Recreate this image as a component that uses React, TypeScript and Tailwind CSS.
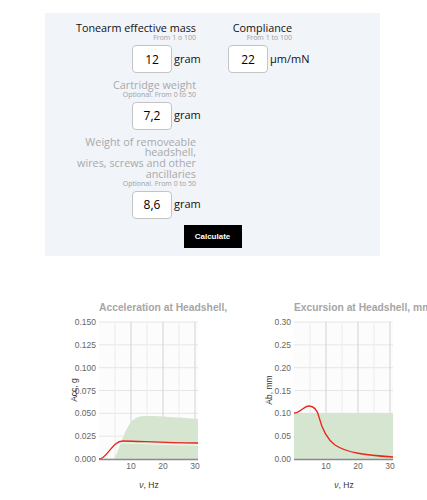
import React from 'react';

const sans = { fontFamily: '"Open Sans", sans-serif' };

type FieldProps = {
  label: React.ReactNode;
  hint: string;
  value: string;
  unit: string;
  muted?: boolean;
  className?: string;
};

const Field: React.FC<FieldProps> = ({ label, hint, value, unit, muted, className }) => (
  <div className={`flex flex-col items-end ${className ?? ''}`}>
    <p
      className={`max-w-[130px] text-right text-[10.8px] ${
        muted ? 'leading-[10.7px] text-[#a9a9a9]' : 'leading-[12px] text-[#111]'
      }`}
    >
      {label}
    </p>
    <p className="text-right text-[7px] leading-[7px] text-[#a0a0a0]">{hint}</p>
    <div className="mt-[4px] flex w-16 items-center">
      <input
        type="text"
        defaultValue={value}
        className="h-7 w-10 shrink-0 rounded-[4px] border border-[#c4c4c4] bg-white text-center text-[12px] text-black outline-none"
      />
      <span className="ml-[2px] whitespace-nowrap text-[11px] text-[#111]">{unit}</span>
    </div>
  </div>
);

type ChartProps = {
  title: string;
  yLabel: string;
  ticks: string[];
  fill: string;
  line: string;
  shadow?: boolean;
};

// plot area: x 39..138, y 33..170
const Chart: React.FC<ChartProps> = ({ title, yLabel, ticks, fill, line, shadow }) => {
  const top = 33;
  const bottom = 170;
  const step = (bottom - top) / 6;
  const vx = (v: number) => 39 + v * 3.2;
  return (
    <svg width="195" height="210" viewBox="0 0 195 210" className="shrink-0" style={{ fontFamily: '"Liberation Sans", Arial, sans-serif' }}>
      <text x="39" y="22" fontSize="10.3" fontWeight="bold" fill="#a6a6a6">
        {title}
      </text>
      <rect x="39" y={top} width="99" height={bottom - top} fill="#fcfcfc" />
      {ticks.map((t, i) => {
        const y = bottom - i * step;
        return (
          <g key={t}>
            <line x1="39" x2="138" y1={y} y2={y} stroke="#e6e6e6" strokeWidth="1" />
            <text x="36" y={y + 3} fontSize="8.5" fill="#666" textAnchor="end">
              {t}
            </text>
          </g>
        );
      })}
      {[5, 10, 15, 20, 25, 30].map((v) => (
        <line
          key={v}
          x1={vx(v)}
          x2={vx(v)}
          y1={top}
          y2={bottom}
          stroke={v % 10 === 0 ? '#d2d2d2' : '#ececec'}
          strokeWidth="1"
        />
      ))}
      <path d={fill} fill="#d5e5cf" />
      {shadow && <path d={line} transform="translate(0,2)" fill="none" stroke="#f4fbf6" strokeWidth="1" />}
      <path d={line} fill="none" stroke="#e8261c" strokeWidth="1.3" />
      <line x1="39" x2="138" y1={bottom + 0.5} y2={bottom + 0.5} stroke="#8a8a8a" strokeWidth="1.5" />
      {[10, 20, 30].map((v) => (
        <text key={v} x={vx(v)} y="180" fontSize="8.5" fill="#666" textAnchor="middle">
          {v}
        </text>
      ))}
      <text x="89" y="199" fontSize="8.5" fill="#333" textAnchor="middle">
        <tspan fontStyle="italic">ν</tspan>, Hz
      </text>
      <text
        x="0"
        y="0"
        fontSize="8.5"
        fill="#333"
        textAnchor="middle"
        transform="translate(17,101) rotate(-90)"
      >
        {yLabel}
      </text>
    </svg>
  );
};

export default function App() {
  return (
    <div className="min-h-[500px] w-[427px] overflow-hidden bg-white">
      <div className="ml-[45px] mt-[13px] w-[335px] bg-[#f1f4f9] pb-[8px] pt-[9px]" style={sans}>
        <div className="flex gap-[30px]">
          <div className="flex w-[151px] flex-col items-end">
            <Field label="Tonearm effective mass" hint="From 1 o 100" value="12" unit="gram" />
            <Field
              className="mt-[7px]"
              label="Cartridge weight"
              hint="Optional. From 0 to 50"
              value="7,2"
              unit="gram"
              muted
            />
            <Field
              className="mt-[7px]"
              label={
                <>
                  Weight of removeable headshell,
                  <br />
                  wires, screws and other ancillaries
                </>
              }
              hint="Optional. From 0 to 50"
              value="8,6"
              unit="gram"
              muted
            />
          </div>
          <div className="flex flex-col items-start">
            <Field label="Compliance" hint="From 1 to 100" value="22" unit="µm/mN" className="w-[66px]" />
          </div>
        </div>
        <div className="mt-[6.5px] flex justify-center">
          <button
            className="h-[23px] w-[58px] bg-black text-[8px] font-bold text-white"
            style={{ fontFamily: '"Liberation Sans", Arial, sans-serif' }}
          >
            Calculate
          </button>
        </div>
      </div>

      <div className="mt-[33px] flex pl-[60px]">
        <Chart
          title="Acceleration at Headshell,"
          yLabel="Acc, g"
          ticks={['0.000', '0.025', '0.050', '0.075', '0.100', '0.125', '0.150']}
          fill="M54,170 C60,160 64,140 72,132 C76,128 80,127 86,127 C105,127 120,129 138,130 L138,170 Z"
          line="M39,170 C47,170 52,152 63,152 C80,152 100,154 138,154"
          shadow
        />
        <Chart
          title="Excursion at Headshell, mm"
          yLabel="Ab, mm"
          ticks={['0.00', '0.05', '0.10', '0.15', '0.20', '0.25', '0.30']}
          fill="M39,124 L138,124 L138,170 L39,170 Z"
          line="M39,124 C45,124 49,117 54,117 C58,117 62,120 64,128 C67,140 72,150 80,156 C92,164 110,166 138,168"
        />
      </div>
    </div>
  );
}
